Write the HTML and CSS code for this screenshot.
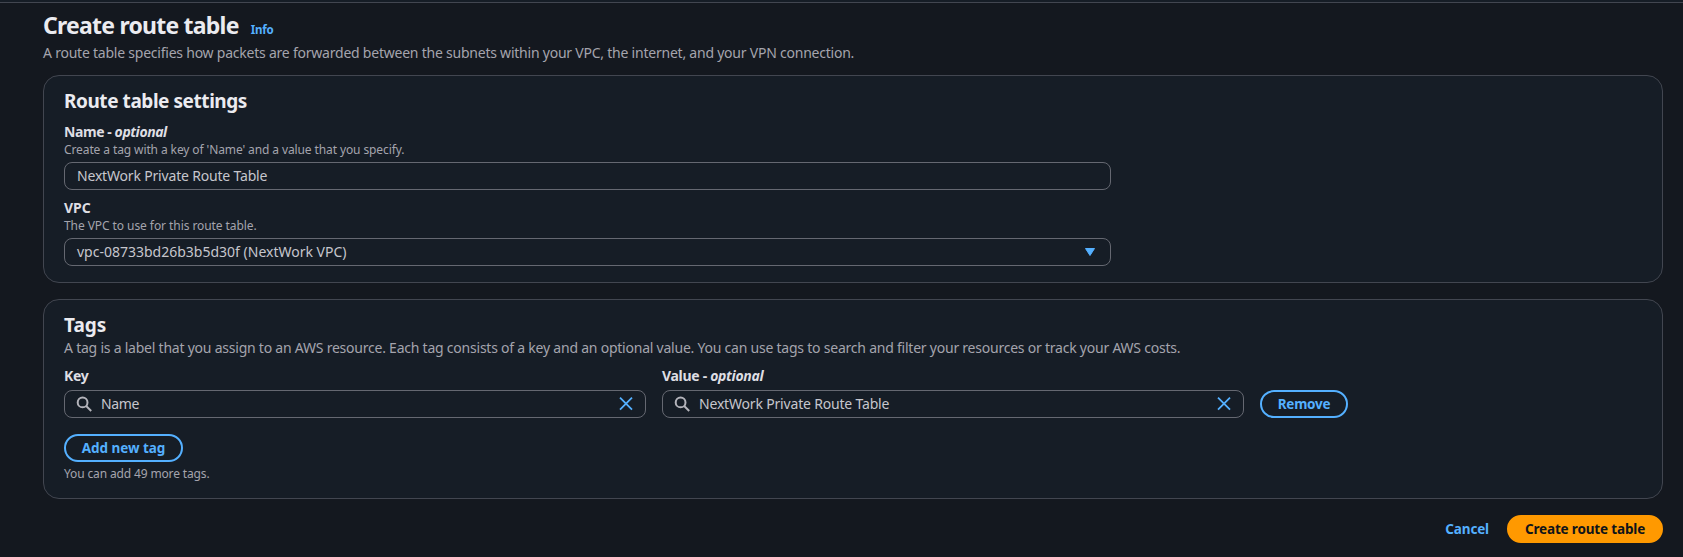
FILE: index.html
```html
<!DOCTYPE html>
<html lang="en">
<head>
<meta charset="utf-8">
<title>Create route table</title>
<link rel="stylesheet" href="styles.css">
</head>
<body>
<div class="topbar"></div>
<main class="page">
  <header class="page-header">
    <div class="title-row"><h1 class="title">Create route table</h1><a class="info">Info</a></div>
    <p class="description">A route table specifies how packets are forwarded between the subnets within your VPC, the internet, and your VPN connection.</p>
  </header>
  <section class="card settings">
    <h2 class="heading">Route table settings</h2>
    <div class="field">
      <label class="label name-label">Name - <em>optional</em></label>
      <p class="hint">Create a tag with a key of 'Name' and a value that you specify.</p>
      <div class="control"><span class="value">NextWork Private Route Table</span></div>
    </div>
    <div class="field">
      <label class="label">VPC</label>
      <p class="hint vpc-hint">The VPC to use for this route table.</p>
      <div class="control"><span class="value vpc-id">vpc-08733bd26b3b5d30f (NextWork VPC)</span>
        <svg class="caret" width="16" height="16" viewBox="0 0 16 16"><path d="M3.5 4.5h9L8 11.5z"/></svg></div>
    </div>
  </section>
  <section class="card tags">
    <h2 class="heading tags-heading">Tags</h2>
    <p class="description">A tag is a label that you assign to an AWS resource. Each tag consists of a key and an optional value. You can use tags to search and filter your resources or track your AWS costs.</p>
    <div class="tag-row">
      <div class="tag-field">
        <label class="label key-label">Key</label>
        <div class="control">
          <svg class="search" width="16" height="16" viewBox="0 0 16 16"><circle cx="5.6" cy="6.4" r="4.9"/><path d="m9.2 10 5 5"/></svg>
          <span class="value tag-key">Name</span>
          <svg class="clear" width="16" height="16" viewBox="0 0 16 16"><path d="m2 1.7 12 12M14 1.7l-12 12"/></svg>
        </div>
      </div>
      <div class="tag-field">
        <label class="label value-label">Value - <em>optional</em></label>
        <div class="control">
          <svg class="search" width="16" height="16" viewBox="0 0 16 16"><circle cx="5.6" cy="6.4" r="4.9"/><path d="m9.2 10 5 5"/></svg>
          <span class="value">NextWork Private Route Table</span>
          <svg class="clear" width="16" height="16" viewBox="0 0 16 16"><path d="m2 1.7 12 12M14 1.7l-12 12"/></svg>
        </div>
      </div>
      <button class="button remove">Remove</button>
    </div>
    <button class="button add">Add new tag</button>
    <p class="hint remaining">You can add 49 more tags.</p>
  </section>
  <footer class="actions">
    <a class="cancel">Cancel</a>
    <button class="button primary">Create route table</button>
  </footer>
</main>
</body>
</html>
```
FILE: styles.css
```css
* { box-sizing: border-box; }
body { margin: 0; height: 557px; overflow: hidden; background: #14181f; color: #c6c6cd; font: 14px/20px "Noto Sans", sans-serif; }
h1, h2, p { margin: 0; }
.topbar { height: 3px; background: #161d26; border-bottom: 1px solid #424650; }
.page { padding: 7px 20px 0 43px; }
.page-header { height: 65px; }
.title-row { display: flex; align-items: baseline; gap: 12px; height: 33px; }
.title { font-size: 23px; line-height: 30px; letter-spacing: -0.77px; color: #ebebf0; }
.info { font-size: 11.5px; line-height: 16px; font-weight: 700; letter-spacing: -0.15px; color: #54b0ff; }
.description { color: #a4a4ad; letter-spacing: -0.227px; white-space: nowrap; }
.card { border: 1px solid #424650; border-radius: 16px; background: #161d26; padding: 13px 20px 0; }
.settings { height: 208px; margin-bottom: 16px; }
.tags { height: 200px; }
.heading { font-size: 19px; line-height: 24px; letter-spacing: -0.44px; color: #ebebf0; margin-bottom: 9px; }
.tags-heading { letter-spacing: 0; margin-bottom: 1px; }
.field { height: 76px; }
.label { display: block; font-weight: 700; color: #dedee3; line-height: 20px; }
.name-label { letter-spacing: -0.42px; }
.value-label { letter-spacing: -0.3px; }
.key-label { letter-spacing: -0.3px; }
.hint { font-size: 12px; line-height: 16px; letter-spacing: -0.105px; color: #a4a4ad; }
.vpc-hint { letter-spacing: -0.07px; }
.remaining { margin-top: 4px; letter-spacing: -0.14px; }
.control { display: flex; align-items: center; height: 28px; margin-top: 4px; border: 1px solid #656871; border-radius: 8px; padding: 0 12px; }
.value { letter-spacing: -0.18px; }
.tag-key { letter-spacing: -0.4px; }
.vpc-id { letter-spacing: 0; }
.field .control { width: 1047px; }
.caret, .clear { margin-left: auto; }
.caret { fill: #54b0ff; stroke: #54b0ff; stroke-width: 1; stroke-linejoin: round; }
.clear { fill: none; stroke: #54b0ff; stroke-width: 1.8; margin-right: -1px; }
.search { fill: none; stroke: #b4b4bb; stroke-width: 2; margin-right: 8px; overflow: visible; }
.tag-row { display: flex; align-items: flex-end; gap: 16px; margin-top: 8px; }
.tag-field { width: 582px; }
.button { height: 28px; border: 2px solid #54b0ff; border-radius: 20px; background: none; color: #54b0ff; font: 700 13.5px/20px "Noto Sans", sans-serif; padding: 0; }
.remove { width: 88px; letter-spacing: -0.25px; }
.add { width: 119px; display: block; margin-top: 16px; letter-spacing: -0.05px; }
.actions { display: flex; justify-content: flex-end; align-items: center; gap: 18px; margin-top: 16px; }
.cancel { font-size: 13.5px; font-weight: 700; letter-spacing: -0.15px; color: #54b0ff; }
.primary { width: 156px; background: #ff9900; border-color: #ff9900; color: #0f141a; letter-spacing: -0.16px; }
```
